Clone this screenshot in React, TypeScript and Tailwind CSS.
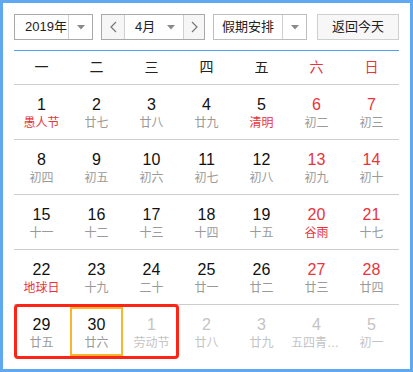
import React from 'react';

type Day = { d: number; sub: string; red?: boolean; holiday?: boolean; other?: boolean };

const WEEK = ['一', '二', '三', '四', '五', '六', '日'];

const ROWS: Day[][] = [
  [
    { d: 1, sub: '愚人节', holiday: true },
    { d: 2, sub: '廿七' },
    { d: 3, sub: '廿八' },
    { d: 4, sub: '廿九' },
    { d: 5, sub: '清明', holiday: true },
    { d: 6, sub: '初二', red: true },
    { d: 7, sub: '初三', red: true },
  ],
  [
    { d: 8, sub: '初四' },
    { d: 9, sub: '初五' },
    { d: 10, sub: '初六' },
    { d: 11, sub: '初七' },
    { d: 12, sub: '初八' },
    { d: 13, sub: '初九', red: true },
    { d: 14, sub: '初十', red: true },
  ],
  [
    { d: 15, sub: '十一' },
    { d: 16, sub: '十二' },
    { d: 17, sub: '十三' },
    { d: 18, sub: '十四' },
    { d: 19, sub: '十五' },
    { d: 20, sub: '谷雨', red: true, holiday: true },
    { d: 21, sub: '十七', red: true },
  ],
  [
    { d: 22, sub: '地球日', holiday: true },
    { d: 23, sub: '十九' },
    { d: 24, sub: '二十' },
    { d: 25, sub: '廿一' },
    { d: 26, sub: '廿二' },
    { d: 27, sub: '廿三', red: true },
    { d: 28, sub: '廿四', red: true },
  ],
  [
    { d: 29, sub: '廿五' },
    { d: 30, sub: '廿六' },
    { d: 1, sub: '劳动节', other: true },
    { d: 2, sub: '廿八', other: true },
    { d: 3, sub: '廿九', other: true },
    { d: 4, sub: '五四青年节', other: true },
    { d: 5, sub: '初一', other: true },
  ],
];

function Caret() {
  return (
    <svg width="8" height="5" viewBox="0 0 8 5">
      <path d="M0 0 L8 0 L4 4.5 Z" fill="#8a8a8a" />
    </svg>
  );
}

function Chevron({ dir }: { dir: 'left' | 'right' }) {
  return (
    <svg width="7" height="12" viewBox="0 0 7 12">
      <path
        d={dir === 'left' ? 'M6 1 L1 6 L6 11' : 'M1 1 L6 6 L1 11'}
        fill="none"
        stroke="#777"
        strokeWidth="1.2"
      />
    </svg>
  );
}

function Cell({ day }: { day: Day }) {
  const numColor = day.other ? 'text-[#c4c4c4]' : day.red ? 'text-[#e8343c]' : 'text-[#111]';
  const subColor = day.other
    ? 'text-[#c4c4c4]'
    : day.holiday
      ? 'text-[#e8343c]'
      : 'text-[#9a9a9a]';
  return (
    <div className="w-[55px] h-[54px] flex flex-col items-center pt-[11px]">
      <span className={`text-[16px] leading-[18px] ${numColor}`}>{day.d}</span>
      <span className={`mt-[1px] text-[12px] leading-[16px] max-w-[51px] truncate ${subColor}`}>
        {day.sub}
      </span>
    </div>
  );
}

export default function App() {
  return (
    <div
      className="w-[413px] h-[372px] border-[3px] border-[#5fa9f3] bg-white px-[11px] pt-[11px] text-[13px] text-[#333]"
      style={{ fontFamily: '"Liberation Sans", "Noto Sans CJK SC", sans-serif' }}
    >
      <div className="flex h-[26px] items-stretch">
        <div className="flex w-[79px] border border-[#a9a9a9] bg-white">
          <div className="flex-1 flex items-center pl-[10px] text-[#222]">2019年</div>
          <div className="w-[24px] border-l border-[#d0d0d0] flex items-center justify-center">
            <Caret />
          </div>
        </div>

        <div className="ml-[8px] flex w-[104px] border border-[#a9a9a9] bg-white">
          <div className="w-[22px] bg-[#f6f6f6] flex items-center justify-center">
            <Chevron dir="left" />
          </div>
          <div className="w-[60px] border-x border-[#d0d0d0] flex items-center justify-between pl-[10px] pr-[8px] text-[#222]">
            <span>4月</span>
            <Caret />
          </div>
          <div className="flex-1 bg-[#f6f6f6] flex items-center justify-center">
            <Chevron dir="right" />
          </div>
        </div>

        <div className="ml-[8px] flex w-[94px] border border-[#bdbdbd] bg-white">
          <div className="flex-1 flex items-center justify-center text-[#222]">假期安排</div>
          <div className="w-[24px] border-l border-[#d0d0d0] flex items-center justify-center">
            <Caret />
          </div>
        </div>

        <div className="ml-[10px] w-[82px] border border-[#cfcfcf] bg-[#f7f7f7] flex items-center justify-center text-[#222]">
          返回今天
        </div>
      </div>

      <div className="mt-[10px] h-[1px] bg-[#4ea1ee]" />

      <div className="flex h-[34px] border-b border-[#cdcdcd]">
        {WEEK.map((w, i) => (
          <div
            key={w}
            className={`w-[55px] flex items-center justify-center text-[14px] ${i >= 5 ? 'text-[#e8343c]' : 'text-[#222]'}`}
          >
            {w}
          </div>
        ))}
      </div>

      {ROWS.map((row, ri) => {
        const last = ri === ROWS.length - 1;
        return (
          <div
            key={ri}
            className={`relative flex ${last ? '' : 'border-b border-[#cdcdcd]'}`}
          >
            {row.map((day, ci) => (
              <Cell key={ci} day={day} />
            ))}
            {last && (
              <>
                <div className="absolute left-0 top-[-1px] bottom-0 w-[165px] border-[3px] border-[#ff2516] rounded-[4px]" />
                <div className="absolute left-[56px] top-[2px] bottom-[3px] w-[53px] border-2 border-[#f8b62c]" />
              </>
            )}
          </div>
        );
      })}
    </div>
  );
}
